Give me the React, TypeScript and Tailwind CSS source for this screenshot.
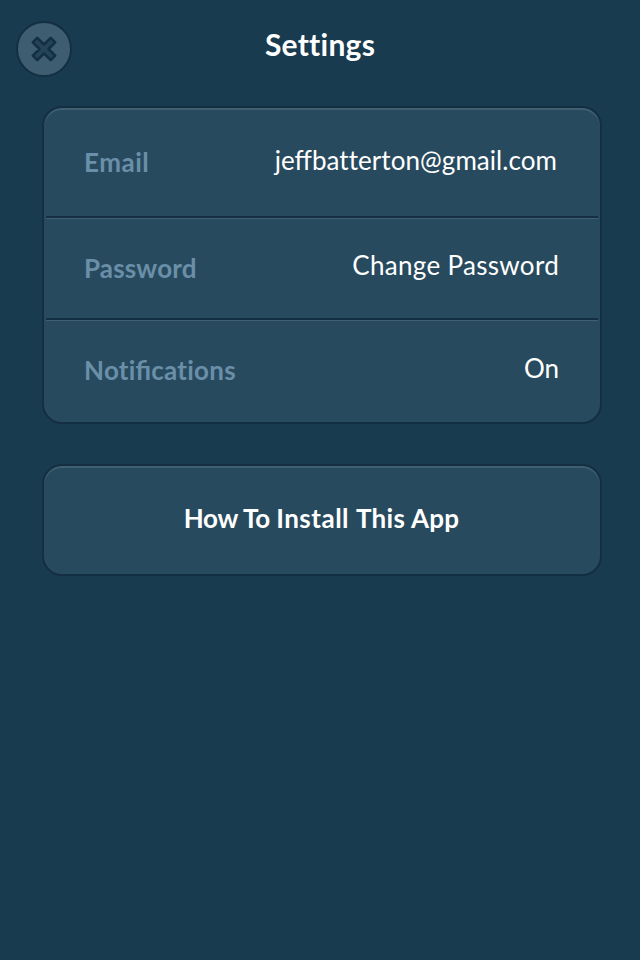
import type { ReactNode } from 'react';

const card =
  'w-[560px] rounded-[20px] border-2 border-[#142f42] bg-[#284a5e] shadow-[inset_0_2px_0_#3f5f72]';

function Divider() {
  return <div className="mx-0.5 h-[3px] border-t-2 border-[#142f42] bg-[#416073]" />;
}

function Row({ label, value, className, valueClass }: { label: ReactNode; value: ReactNode; className: string; valueClass: string }) {
  return (
    <div className={`flex justify-between pl-10 text-[26px] leading-8 ${className}`}>
      <span className="mt-0.5 font-bold text-[#6a8fa9]">{label}</span>
      <span className={`text-white ${valueClass}`}>{value}</span>
    </div>
  );
}

function CloseIcon() {
  return (
    <svg width="28" height="28" viewBox="0 0 28 28">
      <path
        d="M7.3 2.8 14 9.5l6.7-6.7 4.5 4.5-6.7 6.7 6.7 6.7-4.5 4.5-6.7-6.7-6.7 6.7-4.5-4.5 6.7-6.7-6.7-6.7z"
        fill="#254359"
        stroke="#142f42"
        strokeWidth="2.5"
        strokeLinejoin="round"
      />
    </svg>
  );
}

export default function App() {
  return (
    <main className="flex h-[960px] w-[640px] flex-col bg-[#193b50] font-['Lato',sans-serif]">
      <header className="grid h-[106px] grid-cols-[72px_1fr_72px] items-start pt-[21px]">
        <button className="ml-4 flex size-14 items-center justify-center rounded-full border-2 border-[#142f42] bg-[#3f5d70]">
          <CloseIcon />
        </button>
        <h1 className="mt-[3px] text-center text-[30px] leading-10 font-bold tracking-[0.25px] text-white">Settings</h1>
      </header>
      <section className={`ml-[42px] h-[318px] ${card}`}>
        <Row
          label={<span className="tracking-[0.5px]">Email</span>}
          value={
            <>
              jeff<span className="tracking-[0.06px]">batterton@gmail.com</span>
            </>
          }
          className="h-[108px] pt-9"
          valueClass="mr-[43px]"
        />
        <Divider />
        <Row
          label={<span className="tracking-[0.15px]">Password</span>}
          value="Change Password"
          className="h-[99px] pt-[30px] [&>span:first-child]:mt-[3px]"
          valueClass="mr-[41px] tracking-[0.3px]"
        />
        <Divider />
        <Row
          label={
            <>
              <span className="tracking-[0.25px]">Noti</span>fi<span className="tracking-[0.25px]">cations</span>
            </>
          }
          value="On"
          className="h-[101px] pt-[31px]"
          valueClass="mr-[41px]"
        />
      </section>
      <button className={`mt-10 ml-[42px] flex h-28 items-start justify-center pt-9 text-[26px] leading-8 font-bold text-white ${card}`}>
        <span className="-ml-px whitespace-pre">
          <span className="tracking-[-0.2px]">How To </span>
          <span className="tracking-[0.5px]">Install </span>
          <span className="tracking-[0.3px]">This App</span>
        </span>
      </button>
    </main>
  );
}
